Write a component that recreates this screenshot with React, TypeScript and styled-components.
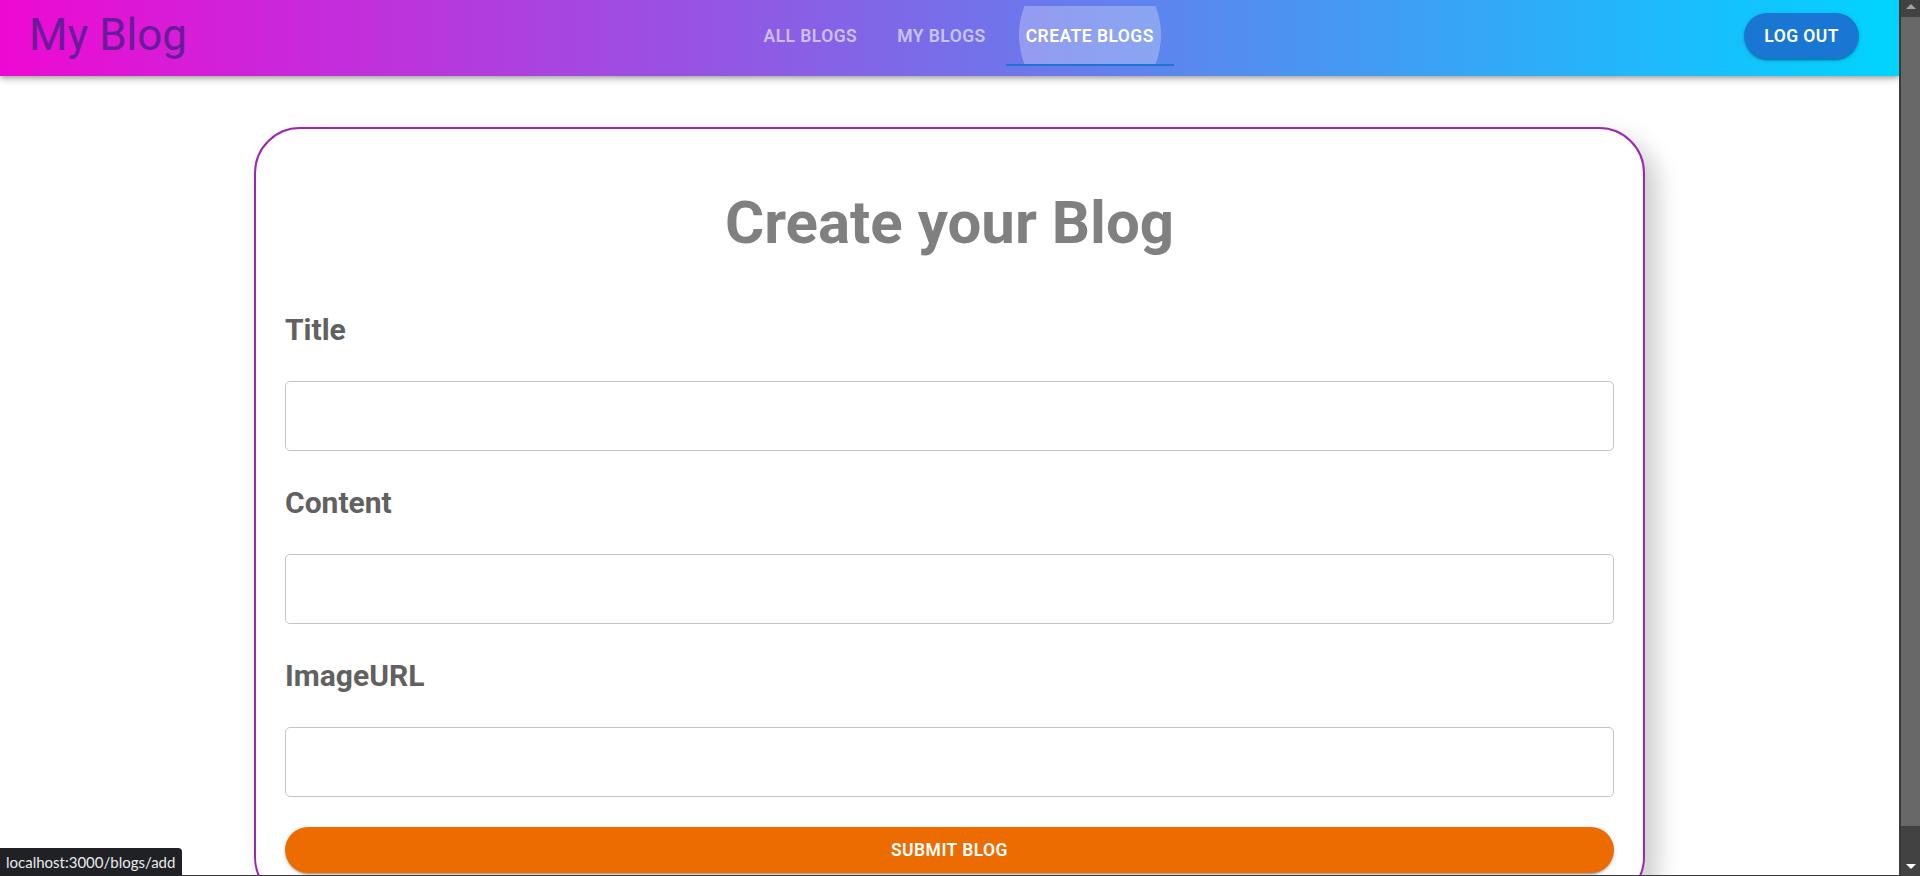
import React from "react";
import styled, { createGlobalStyle, css } from "styled-components";

const GlobalStyle = createGlobalStyle`
  html, body, #root {
    margin: 0;
    padding: 0;
    height: 100%;
  }
  body {
    overflow: hidden;
    background: #ffffff;
    font-family: Roboto, "Liberation Sans", Arial, sans-serif;
  }
  * { box-sizing: border-box; }
`;

const Frame = styled.div`
  display: flex;
  width: 100vw;
  height: 100vh;
`;

const Viewport = styled.div`
  flex: 1;
  min-width: 0;
  display: flex;
  flex-direction: column;
  overflow: hidden;
  border-bottom: 1px solid #3a3a3a;
`;

const Header = styled.header`
  position: relative;
  z-index: 2;
  flex-shrink: 0;
  height: 76px;
  display: flex;
  align-items: center;
  padding: 0 40px 4px 29px;
  background: linear-gradient(90deg, rgb(238, 9, 211) 0%, rgb(0, 212, 255) 100%);
  box-shadow: 0px 2px 4px -1px rgba(0, 0, 0, 0.2), 0px 4px 5px 0px rgba(0, 0, 0, 0.14),
    0px 1px 10px 0px rgba(0, 0, 0, 0.12);
`;

const Logo = styled.h1`
  margin: 0 0 2px 0;
  font-family: Roboto, "Liberation Sans", sans-serif;
  font-size: 44px;
  line-height: 1.2;
  font-weight: 400;
  color: #6a1b9a;
  white-space: nowrap;
`;

const Tabs = styled.nav`
  display: flex;
  height: 60px;
  margin: 0 auto;
  padding-right: 14px;
`;

const Tab = styled.a<{ $active?: boolean }>`
  position: relative;
  overflow: hidden;
  display: flex;
  align-items: center;
  justify-content: center;
  height: 60px;
  padding: 2px 20px 0;
  border-bottom: 2px solid transparent;
  font-family: Roboto, "Liberation Sans", sans-serif;
  font-size: 17.5px;
  font-weight: 600;
  letter-spacing: 0.45px;
  text-transform: uppercase;
  text-decoration: none;
  white-space: nowrap;
  color: rgba(255, 255, 255, 0.6);
  cursor: pointer;

  ${(p) =>
    p.$active &&
    css`
      color: #ffffff;
      border-bottom-color: #1976d2;
      &::before {
        content: "";
        position: absolute;
        left: 50%;
        top: 50%;
        width: 142px;
        height: 150px;
        transform: translate(-50%, -50%);
        border-radius: 50%;
        background: rgba(255, 255, 255, 0.27);
      }
    `}

  span {
    position: relative;
  }
`;

const PillButton = styled.button<{ $tone: "blue" | "orange"; $wide?: boolean }>`
  height: 46px;
  padding: 0 20px;
  border: none;
  border-radius: 23px;
  font-family: Roboto, "Liberation Sans", sans-serif;
  font-size: 17.5px;
  font-weight: 600;
  letter-spacing: 0.45px;
  text-transform: uppercase;
  color: #ffffff;
  cursor: pointer;
  background: ${(p) => (p.$tone === "blue" ? "#1976d2" : "#ed6c02")};
  width: ${(p) => (p.$wide ? "100%" : "auto")};
  flex-shrink: 0;
  box-shadow: 0px 3px 1px -2px rgba(0, 0, 0, 0.2), 0px 2px 2px 0px rgba(0, 0, 0, 0.14),
    0px 1px 5px 0px rgba(0, 0, 0, 0.12);
`;

const Content = styled.main`
  flex: 1;
  min-height: 0;
  padding-top: 51px;
`;

const Card = styled.section`
  width: 1391px;
  margin: 0 auto;
  padding: 58px 29px 28px;
  border: 2px solid #9c27b0;
  border-radius: 46px;
  background: #ffffff;
  box-shadow: 12px 12px 24px #cccccc;
`;

const Heading = styled.h2`
  margin: 0 0 53px;
  font-family: Roboto, "Liberation Sans", sans-serif;
  font-size: 60px;
  line-height: 72px;
  font-weight: 700;
  text-align: center;
  color: #808080;
`;

const Form = styled.form`
  display: flex;
  flex-direction: column;
`;

const Label = styled.label`
  display: block;
  margin-bottom: 33px;
  font-family: Roboto, "Liberation Sans", sans-serif;
  font-size: 30px;
  line-height: 36px;
  font-weight: 700;
  color: #616161;
`;

const Input = styled.input`
  display: block;
  width: 100%;
  height: 70px;
  margin-bottom: 34px;
  padding: 0 17px;
  border: 1px solid #c4c4c4;
  border-radius: 5px;
  font-family: Roboto, "Liberation Sans", sans-serif;
  font-size: 19px;
  color: #222;
  background: #fff;
  outline: none;
`;

const SubmitRow = styled.div`
  margin-top: -4px;
`;

const Scrollbar = styled.div`
  width: 21px;
  flex-shrink: 0;
  display: flex;
  flex-direction: column;
  background: #424242;
  border-left: 2px solid #3a3a3a;
`;

const ArrowCell = styled.div<{ $h: number }>`
  height: ${(p) => p.$h}px;
  display: flex;
  align-items: center;
  justify-content: center;
  flex-shrink: 0;
`;

const Triangle = styled.div<{ $dir: "up" | "down" }>`
  width: 0;
  height: 0;
  border-left: 5px solid transparent;
  border-right: 5px solid transparent;
  ${(p) =>
    p.$dir === "up"
      ? css`
          border-bottom: 5px solid #a3a3a3;
          margin-bottom: 4px;
        `
      : css`
          border-top: 5px solid #ffffff;
          margin-top: 2px;
        `}
`;

const Thumb = styled.div`
  height: 809px;
  flex-shrink: 0;
  background: #686868;
`;

const Track = styled.div`
  flex: 1;
`;

const StatusTip = styled.div`
  position: fixed;
  left: 0;
  bottom: 0;
  z-index: 10;
  height: 28px;
  padding: 0 7px 0 6px;
  display: flex;
  align-items: center;
  background: #202124;
  border-radius: 0 4px 0 0;
  font-family: Lato, "Noto Sans", sans-serif;
  font-size: 15px;
  color: #e8eaed;
  white-space: nowrap;
`;

const tabs = [
  { label: "All Blogs", active: false },
  { label: "My Blogs", active: false },
  { label: "Create Blogs", active: true },
];

const fields = ["Title", "Content", "ImageURL"];

export default function App() {
  return (
    <>
      <GlobalStyle />
      <Frame>
        <Viewport>
          <Header>
            <Logo>My Blog</Logo>
            <Tabs>
              {tabs.map((t) => (
                <Tab key={t.label} $active={t.active}>
                  <span>{t.label}</span>
                </Tab>
              ))}
            </Tabs>
            <PillButton $tone="blue" type="button">
              Log Out
            </PillButton>
          </Header>
          <Content>
            <Card>
              <Heading>Create your Blog</Heading>
              <Form onSubmit={(e) => e.preventDefault()}>
                {fields.map((f) => (
                  <React.Fragment key={f}>
                    <Label htmlFor={`field-${f}`}>{f}</Label>
                    <Input id={`field-${f}`} type="text" />
                  </React.Fragment>
                ))}
                <SubmitRow>
                  <PillButton $tone="orange" $wide type="submit">
                    Submit Blog
                  </PillButton>
                </SubmitRow>
              </Form>
            </Card>
          </Content>
        </Viewport>
        <Scrollbar>
          <ArrowCell $h={17}>
            <Triangle $dir="up" />
          </ArrowCell>
          <Thumb />
          <Track />
          <ArrowCell $h={21}>
            <Triangle $dir="down" />
          </ArrowCell>
        </Scrollbar>
      </Frame>
      <StatusTip>localhost:3000/blogs/add</StatusTip>
    </>
  );
}
